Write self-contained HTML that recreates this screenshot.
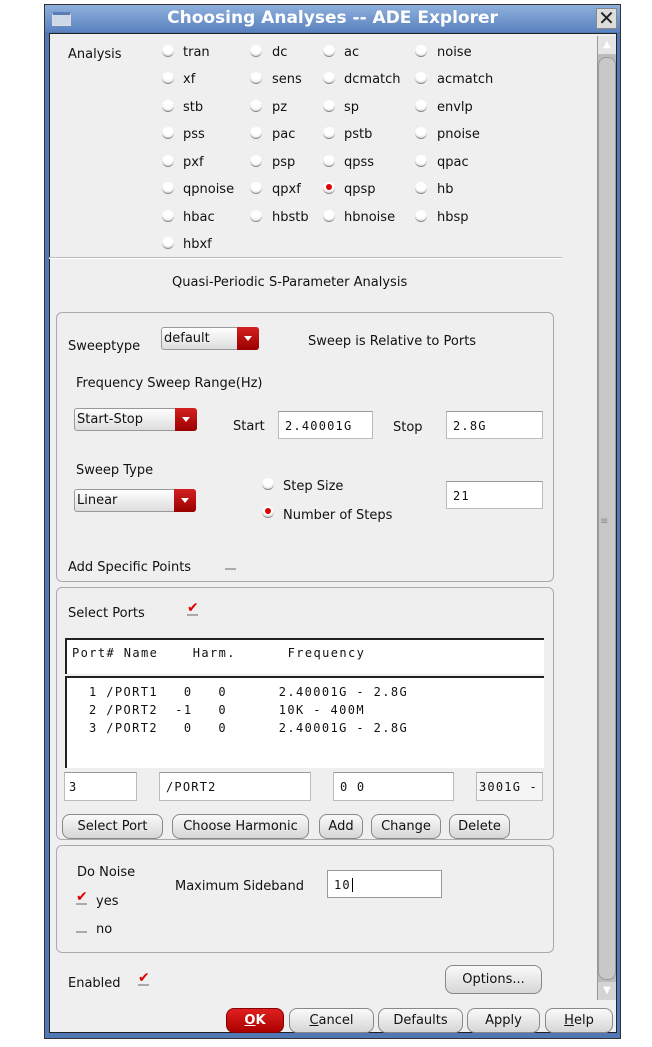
<!DOCTYPE html>
<html><head><style>
*{box-sizing:border-box;margin:0;padding:0}
body{width:652px;height:1047px;background:#fff;position:relative;overflow:hidden;font-family:"DejaVu Sans","Liberation Sans",sans-serif;font-size:13px;color:#111;line-height:19px}
.a{position:absolute;white-space:nowrap}
.win{position:absolute;left:44px;top:4px;width:577px;height:1035px;background:#4f78b4;border:1px solid #333}
.title{position:absolute;left:0;top:0;width:575px;height:27px;background:linear-gradient(#8fb0dc,#5a82bf);color:#fff;font-weight:bold;font-size:17px;text-align:center;line-height:27px}
.body{position:absolute;left:4px;top:28px;width:568px;height:1000px;background:#efefef;border:1px solid #222}
.rad{position:absolute;width:12px;height:12px;border-radius:50%;background:radial-gradient(circle at 50% 35%,#fff 50%,#bbb 100%);border-bottom:1px solid #888}
.rad.on::after{content:"";position:absolute;left:3px;top:2px;width:6px;height:6px;border-radius:50%;background:#d00}
.grp{position:absolute;left:56px;width:498px;border:1px solid #aaa;border-radius:6px}
.inp{position:absolute;background:#fff;border:1px solid #bbb;border-top-color:#999;font-family:"DejaVu Sans Mono",monospace;font-size:12px;letter-spacing:1.2px;padding-left:6px;overflow:hidden;white-space:nowrap}
.dd{position:absolute;height:23px;border:1px solid #999;border-radius:3px;background:linear-gradient(#fff,#ddd);padding-left:2px;line-height:21px}
.dd b{position:absolute;right:-1px;top:-1px;width:22px;height:23px;background:linear-gradient(#d42020,#900);border-radius:0 3px 3px 0}
.dd b::after{content:"";position:absolute;left:7px;top:9px;border:4px solid transparent;border-top:5px solid #fff}
.btn{position:absolute;height:25px;border:1px solid #888;border-radius:8px;background:linear-gradient(#fafafa,#d6d6d6);text-align:center;line-height:23px}
.chk{position:absolute;width:11px;height:11px;border-bottom:2px solid #aaa}
.chk.on::after{content:"✔";position:absolute;left:0;top:-6px;color:#d00;font-size:14px}
.mono{font-family:"DejaVu Sans Mono",monospace;font-size:12px;letter-spacing:1.4px;white-space:pre}
</style></head><body>
<div class="win">
<div class="title">Choosing Analyses -- ADE Explorer</div>
<div style="position:absolute;left:7px;top:7px;width:19px;height:14px;border:1px solid #ddd;background:#cfd8e6;border-top:3px solid #5a7db4"></div>
<div style="position:absolute;left:551px;top:3px;width:21px;height:21px;background:#ddd;border:1px solid #888;font-size:20px;line-height:19px;text-align:center;color:#222;font-weight:bold">✕</div>
<div class="body"></div>
</div>
<div class="a" style="left:597px;top:36px;width:19px;height:964px;background:#bcbcbc;border-left:1px solid #999"></div>
<div class="a" style="left:598px;top:36px;width:18px;height:18px;background:#e4e4e4;color:#fff;font-size:10px;text-align:center;line-height:18px">▲</div>
<div class="a" style="left:598px;top:57px;width:18px;height:923px;background:#c8c8c8;border:1px solid #999;border-radius:8px"></div>
<div class="a" style="left:600px;top:512px;font-size:10px;color:#888">≡</div>
<div class="a" style="left:598px;top:982px;width:18px;height:18px;background:#d4d4d4;color:#fff;font-size:10px;text-align:center;line-height:18px">▼</div>

<div class="a" style="left:68px;top:45px">Analysis</div>
<div class="rad a" style="left:162px;top:45px"></div><div class="a" style="left:183px;top:43px">tran</div>
<div class="rad a" style="left:250px;top:45px"></div><div class="a" style="left:272px;top:43px">dc</div>
<div class="rad a" style="left:323px;top:45px"></div><div class="a" style="left:344px;top:43px">ac</div>
<div class="rad a" style="left:415px;top:45px"></div><div class="a" style="left:437px;top:43px">noise</div>
<div class="rad a" style="left:162px;top:72px"></div><div class="a" style="left:183px;top:70px">xf</div>
<div class="rad a" style="left:250px;top:72px"></div><div class="a" style="left:272px;top:70px">sens</div>
<div class="rad a" style="left:323px;top:72px"></div><div class="a" style="left:344px;top:70px">dcmatch</div>
<div class="rad a" style="left:415px;top:72px"></div><div class="a" style="left:437px;top:70px">acmatch</div>
<div class="rad a" style="left:162px;top:100px"></div><div class="a" style="left:183px;top:98px">stb</div>
<div class="rad a" style="left:250px;top:100px"></div><div class="a" style="left:272px;top:98px">pz</div>
<div class="rad a" style="left:323px;top:100px"></div><div class="a" style="left:344px;top:98px">sp</div>
<div class="rad a" style="left:415px;top:100px"></div><div class="a" style="left:437px;top:98px">envlp</div>
<div class="rad a" style="left:162px;top:127px"></div><div class="a" style="left:183px;top:125px">pss</div>
<div class="rad a" style="left:250px;top:127px"></div><div class="a" style="left:272px;top:125px">pac</div>
<div class="rad a" style="left:323px;top:127px"></div><div class="a" style="left:344px;top:125px">pstb</div>
<div class="rad a" style="left:415px;top:127px"></div><div class="a" style="left:437px;top:125px">pnoise</div>
<div class="rad a" style="left:162px;top:155px"></div><div class="a" style="left:183px;top:153px">pxf</div>
<div class="rad a" style="left:250px;top:155px"></div><div class="a" style="left:272px;top:153px">psp</div>
<div class="rad a" style="left:323px;top:155px"></div><div class="a" style="left:344px;top:153px">qpss</div>
<div class="rad a" style="left:415px;top:155px"></div><div class="a" style="left:437px;top:153px">qpac</div>
<div class="rad a" style="left:162px;top:182px"></div><div class="a" style="left:183px;top:180px">qpnoise</div>
<div class="rad a" style="left:250px;top:182px"></div><div class="a" style="left:272px;top:180px">qpxf</div>
<div class="rad a on" style="left:323px;top:182px"></div><div class="a" style="left:344px;top:180px">qpsp</div>
<div class="rad a" style="left:415px;top:182px"></div><div class="a" style="left:437px;top:180px">hb</div>
<div class="rad a" style="left:162px;top:210px"></div><div class="a" style="left:183px;top:208px">hbac</div>
<div class="rad a" style="left:250px;top:210px"></div><div class="a" style="left:272px;top:208px">hbstb</div>
<div class="rad a" style="left:323px;top:210px"></div><div class="a" style="left:344px;top:208px">hbnoise</div>
<div class="rad a" style="left:415px;top:210px"></div><div class="a" style="left:437px;top:208px">hbsp</div>
<div class="rad a" style="left:162px;top:237px"></div><div class="a" style="left:183px;top:235px">hbxf</div>
<div class="a" style="left:49px;top:257px;width:513px;height:2px;border-top:1px solid #bbb;border-bottom:1px solid #fff"></div>
<div class="a" style="left:172px;top:273px">Quasi-Periodic S-Parameter Analysis</div>

<div class="grp" style="top:312px;height:270px"></div>
<div class="a" style="left:68px;top:337px">Sweeptype</div>
<div class="dd" style="left:161px;top:327px;width:98px">default<b></b></div>
<div class="a" style="left:308px;top:332px">Sweep is Relative to Ports</div>
<div class="a" style="left:76px;top:374px">Frequency Sweep Range(Hz)</div>
<div class="dd" style="left:74px;top:408px;width:123px">Start-Stop<b></b></div>
<div class="a" style="left:233px;top:417px">Start</div>
<div class="inp" style="left:278px;top:411px;width:95px;height:28px;line-height:28px">2.40001G</div>
<div class="a" style="left:393px;top:418px">Stop</div>
<div class="inp" style="left:446px;top:411px;width:97px;height:28px;line-height:28px">2.8G</div>
<div class="a" style="left:76px;top:461px">Sweep Type</div>
<div class="dd" style="left:74px;top:489px;width:122px">Linear<b></b></div>
<div class="rad a" style="left:262px;top:478px"></div><div class="a" style="left:283px;top:477px">Step Size</div>
<div class="rad a on" style="left:262px;top:506px"></div><div class="a" style="left:283px;top:506px">Number of Steps</div>
<div class="inp" style="left:446px;top:481px;width:97px;height:28px;line-height:28px">21</div>
<div class="a" style="left:68px;top:558px">Add Specific Points</div>
<div class="chk a" style="left:225px;top:559px"></div>

<div class="grp" style="top:587px;height:253px"></div>
<div class="a" style="left:68px;top:604px">Select Ports</div>
<div class="chk a on" style="left:187px;top:605px"></div>
<div class="a mono" style="left:65px;top:638px;width:479px;height:36px;background:#fff;border-top:2px solid #222;border-left:2px solid #222;padding:4px 0 0 5px">Port# Name    Harm.      Frequency</div>
<div class="a mono" style="left:65px;top:676px;width:479px;height:92px;background:#fff;border-top:2px solid #222;border-left:2px solid #222;padding:5px 0 0 22px;line-height:18px">1 /PORT1   0   0      2.40001G - 2.8G
2 /PORT2  -1   0      10K - 400M
3 /PORT2   0   0      2.40001G - 2.8G</div>
<div class="inp" style="left:64px;top:772px;width:73px;height:29px;line-height:29px;padding-left:4px">3</div>
<div class="inp" style="left:159px;top:772px;width:152px;height:29px;line-height:29px">/PORT2</div>
<div class="inp" style="left:333px;top:772px;width:121px;height:29px;line-height:29px">0 0</div>
<div class="inp" style="left:476px;top:772px;width:67px;height:29px;line-height:29px;padding-left:2px;background:#f5f5f5">3001G -</div>
<div class="btn" style="left:62px;top:814px;width:101px">Select Port</div>
<div class="btn" style="left:172px;top:814px;width:137px">Choose Harmonic</div>
<div class="btn" style="left:319px;top:814px;width:44px">Add</div>
<div class="btn" style="left:371px;top:814px;width:70px">Change</div>
<div class="btn" style="left:449px;top:814px;width:61px">Delete</div>

<div class="grp" style="top:845px;height:108px"></div>
<div class="a" style="left:77px;top:863px">Do Noise</div>
<div class="chk a on" style="left:76px;top:894px"></div><div class="a" style="left:96px;top:892px">yes</div>
<div class="chk a" style="left:76px;top:922px"></div><div class="a" style="left:96px;top:920px">no</div>
<div class="a" style="left:175px;top:877px">Maximum Sideband</div>
<div class="inp" style="left:327px;top:870px;width:115px;height:28px;line-height:28px;border-color:#999">10<span style="border-left:1px solid #000;margin-left:1px"></span></div>

<div class="a" style="left:68px;top:974px">Enabled</div>
<div class="chk a on" style="left:138px;top:975px"></div>
<div class="btn" style="left:445px;top:965px;width:97px;height:29px;line-height:27px">Options...</div>

<div class="btn" style="left:226px;top:1008px;width:58px;background:linear-gradient(#e02020,#a00);color:#fff;font-weight:bold;border-color:#800"><u>O</u>K</div>
<div class="btn" style="left:289px;top:1008px;width:85px"><u>C</u>ancel</div>
<div class="btn" style="left:378px;top:1008px;width:85px">Defaults</div>
<div class="btn" style="left:467px;top:1008px;width:73px">Apply</div>
<div class="btn" style="left:545px;top:1008px;width:68px"><u>H</u>elp</div>
</body></html>
